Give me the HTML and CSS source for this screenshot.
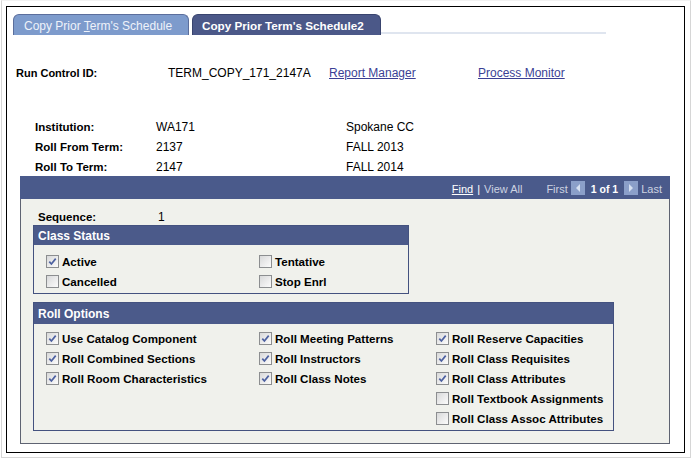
FILE: index.html
```html
<!DOCTYPE html>
<html>
<head>
<meta charset="utf-8">
<link rel="stylesheet" href="styles.css">
</head>
<body>
<div class="shot">
  <div class="page">
    <div class="tabs">
      <div class="tab tab-inactive">Copy Prior <u>T</u>erm's Schedule</div>
      <div class="tab tab-active">Copy Prior Term's Schedule2</div>
      <div class="tab-line"></div>
    </div>

    <div class="runrow">
      <span class="lbl run-lbl">Run Control ID:</span>
      <span class="val">TERM_COPY_171_2147A</span>
      <a class="link" href="#">Report Manager</a>
      <a class="link" href="#">Process Monitor</a>
    </div>

    <div class="fields">
      <span class="lbl">Institution:</span><span class="val">WA171</span><span class="val">Spokane CC</span>
      <span class="lbl">Roll From Term:</span><span class="val">2137</span><span class="val">FALL 2013</span>
      <span class="lbl">Roll To Term:</span><span class="val">2147</span><span class="val">FALL 2014</span>
    </div>

    <div class="scroll">
      <div class="scroll-head">
        <a class="find" href="#">Find</a><span class="sep">|</span><span class="dim">View All</span>
        <span class="dim first">First</span>
        <svg class="nav" width="14" height="14" viewBox="0 0 14 14"><rect width="14" height="14" fill="#8b9fc9"/><path d="M9 3 L5 7 L9 11 Z" fill="#d6e0f1"/></svg>
        <span class="count">1 of 1</span>
        <svg class="nav" width="14" height="14" viewBox="0 0 14 14"><rect width="14" height="14" fill="#8b9fc9"/><path d="M5 3 L9 7 L5 11 Z" fill="#d6e0f1"/></svg>
        <span class="dim last">Last</span>
      </div>
      <div class="scroll-body">
        <div class="seq"><span class="lbl">Sequence:</span><span class="val">1</span></div>

        <div class="group group-status">
          <div class="group-head">Class Status</div>
          <div class="group-body">
            <label class="cb"><span class="box checked"><svg width="11" height="11" viewBox="0 0 11 11"><path d="M2.3 5.6 L4.4 8 L8.7 2.6" fill="none" stroke="#4d61a0" stroke-width="1.7"/></svg></span>Active</label>
            <label class="cb"><span class="box"></span>Tentative</label>
            <label class="cb"><span class="box"></span>Cancelled</label>
            <label class="cb"><span class="box"></span>Stop Enrl</label>
          </div>
        </div>

        <div class="group group-roll">
          <div class="group-head">Roll Options</div>
          <div class="group-body">
            <label class="cb"><span class="box checked"><svg width="11" height="11" viewBox="0 0 11 11"><path d="M2.3 5.6 L4.4 8 L8.7 2.6" fill="none" stroke="#4d61a0" stroke-width="1.7"/></svg></span>Use Catalog Component</label>
            <label class="cb"><span class="box checked"><svg width="11" height="11" viewBox="0 0 11 11"><path d="M2.3 5.6 L4.4 8 L8.7 2.6" fill="none" stroke="#4d61a0" stroke-width="1.7"/></svg></span>Roll Meeting Patterns</label>
            <label class="cb"><span class="box checked"><svg width="11" height="11" viewBox="0 0 11 11"><path d="M2.3 5.6 L4.4 8 L8.7 2.6" fill="none" stroke="#4d61a0" stroke-width="1.7"/></svg></span>Roll Reserve Capacities</label>
            <label class="cb"><span class="box checked"><svg width="11" height="11" viewBox="0 0 11 11"><path d="M2.3 5.6 L4.4 8 L8.7 2.6" fill="none" stroke="#4d61a0" stroke-width="1.7"/></svg></span>Roll Combined Sections</label>
            <label class="cb"><span class="box checked"><svg width="11" height="11" viewBox="0 0 11 11"><path d="M2.3 5.6 L4.4 8 L8.7 2.6" fill="none" stroke="#4d61a0" stroke-width="1.7"/></svg></span>Roll Instructors</label>
            <label class="cb"><span class="box checked"><svg width="11" height="11" viewBox="0 0 11 11"><path d="M2.3 5.6 L4.4 8 L8.7 2.6" fill="none" stroke="#4d61a0" stroke-width="1.7"/></svg></span>Roll Class Requisites</label>
            <label class="cb"><span class="box checked"><svg width="11" height="11" viewBox="0 0 11 11"><path d="M2.3 5.6 L4.4 8 L8.7 2.6" fill="none" stroke="#4d61a0" stroke-width="1.7"/></svg></span>Roll Room Characteristics</label>
            <label class="cb"><span class="box checked"><svg width="11" height="11" viewBox="0 0 11 11"><path d="M2.3 5.6 L4.4 8 L8.7 2.6" fill="none" stroke="#4d61a0" stroke-width="1.7"/></svg></span>Roll Class Notes</label>
            <label class="cb"><span class="box checked"><svg width="11" height="11" viewBox="0 0 11 11"><path d="M2.3 5.6 L4.4 8 L8.7 2.6" fill="none" stroke="#4d61a0" stroke-width="1.7"/></svg></span>Roll Class Attributes</label>
            <span></span><span></span>
            <label class="cb"><span class="box"></span>Roll Textbook Assignments</label>
            <span></span><span></span>
            <label class="cb"><span class="box"></span>Roll Class Assoc Attributes</label>
          </div>
        </div>
      </div>
    </div>
  </div>
</div>
</body>
</html>
```

FILE: styles.css
```css
* { box-sizing: border-box; }

html, body {
  margin: 0;
  padding: 0;
  background: #ffffff;
}

body {
  font-family: "Liberation Sans", Arial, sans-serif;
  font-size: 12px;
  color: #000;
}

.shot {
  margin-left: 1px;
  width: 690px;
  height: 458px;
  border: 1px solid #d6d6d6;
  border-top-color: #f2f2f2;
  padding: 5px 0 0 4px;
}

.page {
  width: 679px;
  height: 447px;
  border: 1px solid #000;
  padding: 7px 0 0 6px;
}

/* Tabs */
.tabs {
  display: flex;
  align-items: flex-end;
  height: 21px;
}

.tab {
  height: 21px;
  border-radius: 6px 6px 0 0;
  white-space: nowrap;
  padding-top: 1px;
  line-height: 20px;
}

.tab-inactive {
  width: 176px;
  background: #7d9bcc;
  border: 1px solid #5b6e9c;
  border-bottom: none;
  color: #eef2fa;
  padding-left: 10px;
}

.tab-inactive u { text-decoration: underline; }

.tab-active {
  margin-left: 3px;
  width: 189px;
  background: #4b5888;
  border: 1px solid #39446e;
  border-bottom: none;
  color: #fff;
  font-weight: bold;
  font-size: 11.7px;
  padding-left: 9px;
}

.tab-line {
  width: 225px;
  height: 2px;
  background: #dfe5ef;
  margin-bottom: 1px;
}

/* Run control row */
.runrow {
  display: grid;
  grid-template-columns: 152px 161px 149px auto;
  margin: 31px 0 0 3px;
  line-height: 14px;
  height: 14px;
}

.lbl {
  font-weight: bold;
  font-size: 11.5px;
}

.run-lbl { font-size: 11px; }

.link {
  color: #3b3f95;
  text-decoration: underline;
}

/* Fields */
.fields {
  display: grid;
  grid-template-columns: 121px 190px auto;
  grid-auto-rows: 20px;
  line-height: 20px;
  margin: 37px 0 -1px 22px;
}

/* Scroll area */
.scroll {
  margin-left: 7px;
  width: 650px;
}

.scroll-head {
  height: 23px;
  background: #4a5a8b;
  display: flex;
  justify-content: flex-end;
  align-items: center;
  padding: 3px 8px 0 0;
  font-size: 11px;
  color: #fff;
}

.find {
  color: #fff;
  text-decoration: underline;
}

.sep {
  margin: 0 4px;
  color: #fff;
}

.dim { color: #cdd3e2; }

.first { margin: 0 3px 0 24px; }

.nav { display: block; margin-top: -3px; }

.count {
  font-weight: bold;
  font-size: 10.5px;
  margin: 0 6px;
}

.last { margin-left: 3px; }

.scroll-body {
  height: 245px;
  background: #f0f1ec;
  border: 1px solid #5e6372;
  border-top: none;
  padding: 10px 0 0 12px;
}

.seq {
  display: grid;
  grid-template-columns: 120px auto;
  line-height: 16px;
  height: 15px;
  margin-left: 5px;
}

/* Groups */
.group { border: 1px solid #44527f; }

.group-status {
  width: 376px;
  margin-top: 1px;
}

.group-roll {
  width: 581px;
  margin-top: 8px;
}

.group-head {
  background: #4b5a8a;
  color: #fff;
  font-weight: bold;
  padding-left: 4px;
}

.group-status .group-head {
  height: 19px;
  line-height: 19px;
  padding-top: 1px;
}

.group-roll .group-head {
  height: 21px;
  line-height: 20px;
  padding-top: 1px;
}

.group-body {
  display: grid;
  grid-template-columns: 213px 177px auto;
  grid-auto-rows: 20px;
  padding-left: 12px;
}

.group-status .group-body {
  grid-template-columns: 213px auto;
  padding-top: 6px;
  padding-bottom: 2px;
}

.group-roll .group-body {
  padding-top: 4px;
  padding-bottom: 2px;
}

.cb {
  display: flex;
  align-items: center;
  font-weight: bold;
  font-size: 11.6px;
  white-space: nowrap;
}

.box {
  width: 13px;
  height: 13px;
  border: 1px solid #8c8e90;
  background: linear-gradient(135deg, #d8d9da 0%, #eeeeee 60%, #fbfbfb 100%);
  margin-right: 3px;
  display: flex;
  align-items: center;
  justify-content: center;
}

.box svg { display: block; }
```
